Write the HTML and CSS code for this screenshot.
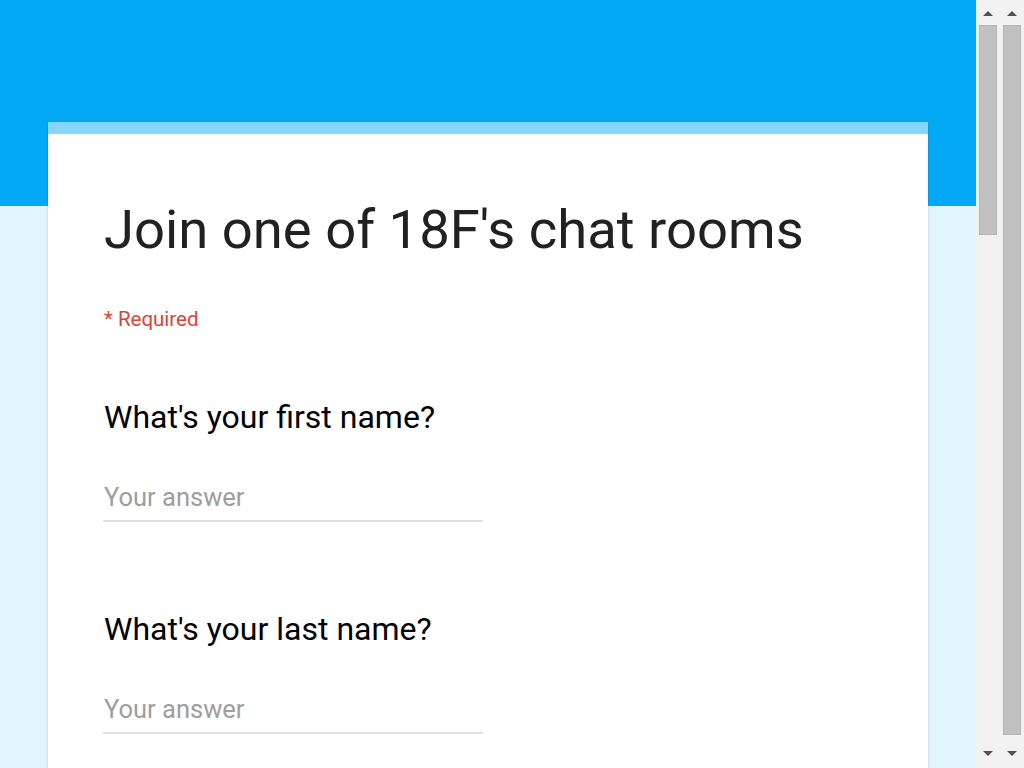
FILE: index.html
```html
<!DOCTYPE html>
<html>
<head>
<meta charset="utf-8">
<link rel="stylesheet" href="styles.css">
</head>
<body>
<div class="viewport">
  <div class="header"></div>
  <div class="page">
    <div class="card">
      <div class="card-bar"></div>
      <div class="card-body">
        <h1 class="title">Join one of 18F's chat rooms</h1>
        <div class="required">* Required</div>
        <div class="question first">
          <div class="q-label">What's your first name?</div>
          <div class="answer">Your answer</div>
        </div>
        <div class="question">
          <div class="q-label">What's your last name?</div>
          <div class="answer">Your answer</div>
        </div>
      </div>
    </div>
  </div>
</div>
<div class="scrollbar">
  <div class="sb-btn"><span class="arrow-up"></span></div>
  <div class="sb-track"><div class="sb-thumb inner-thumb"></div></div>
  <div class="sb-btn"><span class="arrow-down"></span></div>
</div>
<div class="scrollbar">
  <div class="sb-btn"><span class="arrow-up"></span></div>
  <div class="sb-track"><div class="sb-thumb outer-thumb"></div></div>
  <div class="sb-btn"><span class="arrow-down"></span></div>
</div>
</body>
</html>
```

FILE: styles.css
```css
html, body {
  margin: 0;
  padding: 0;
  height: 768px;
  overflow: hidden;
}
body {
  display: flex;
  font-family: Roboto, "Liberation Sans", sans-serif;
}
.viewport {
  width: 976px;
  height: 768px;
  overflow: hidden;
  background: #e1f5fe;
  flex: none;
}
.header {
  height: 206px;
  background: #03a9f4;
}
.page {
  margin-top: -84px;
  display: flex;
  flex-direction: column;
  align-items: center;
}
.card {
  width: 880px;
  height: 700px;
  background: #fff;
  box-shadow: 0 2px 1px -1px rgba(0,0,0,.2), 0 1px 1px 0 rgba(0,0,0,.14), 0 1px 3px 0 rgba(0,0,0,.12);
}
.card-bar {
  height: 12px;
  background: #86d5fa;
}
.card-body {
  padding: 60px 56px 0 56px;
}
.title {
  margin: 0;
  font-weight: 400;
  font-size: 54.4px;
  line-height: 72px;
  color: #212121;
  letter-spacing: 0;
}
.required {
  margin-top: 39px;
  font-size: 20.5px;
  color: #db4437;
  line-height: 28px;
}
.question.first {
  margin-top: 62px;
}
.question {
  margin-top: 85px;
}
.q-label {
  font-size: 32px;
  line-height: 44px;
  color: #000;
}
.answer {
  margin-top: 40px;
  margin-left: -1px;
  padding-left: 1px;
  width: 379px;
  height: 36px;
  padding-bottom: 5px;
  font-size: 25.5px;
  line-height: 36px;
  color: #9e9e9e;
  border-bottom: 2px solid #e0e0e0;
}
.scrollbar {
  width: 24px;
  height: 768px;
  flex: none;
  display: flex;
  flex-direction: column;
  background: #f1f1f1;
}
.sb-btn {
  height: 25px;
  flex: none;
  display: flex;
  align-items: center;
  justify-content: center;
}
.sb-track {
  flex: 1;
  padding: 0 3px;
}
.sb-thumb {
  background: #c1c1c1;
  box-shadow: inset 0 0 0 1px #b5b5b5;
}
.inner-thumb {
  height: 210px;
}
.outer-thumb {
  height: 710px;
}
.arrow-up {
  width: 0;
  height: 0;
  border-left: 5.5px solid transparent;
  border-right: 5.5px solid transparent;
  border-bottom: 5px solid #505050;
  margin-top: 1px;
}
.arrow-down {
  width: 0;
  height: 0;
  border-left: 5.5px solid transparent;
  border-right: 5.5px solid transparent;
  border-top: 5px solid #505050;
  margin-bottom: 5px;
}
```
